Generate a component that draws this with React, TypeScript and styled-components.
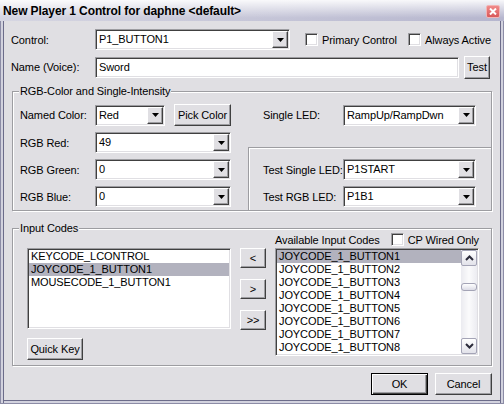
import React from "react"
import styled, { createGlobalStyle, css } from "styled-components"

const face = "#e0dfe3"

const GlobalStyle = createGlobalStyle`
  html, body {
    margin: 0;
    padding: 0;
    background: ${face};
  }
  body {
    font-family: Tahoma, "Liberation Sans", Arial, sans-serif;
    font-size: 11px;
    letter-spacing: -0.1px;
    color: #000;
  }
`

const sunken = css`
  box-sizing: border-box;
  background: #fff;
  border: 1px solid;
  border-color: #9d9da1 #fff #fff #9d9da1;
  box-shadow: inset 1px 1px 0 #404040, inset -1px -1px 0 ${face};
`

const raised = css`
  box-sizing: border-box;
  background: ${face};
  border: 1px solid;
  border-color: #fff #404040 #404040 #fff;
  box-shadow: inset -1px -1px 0 #9d9da1;
`

const Window = styled.div`
  width: 504px;
  height: 404px;
  display: flex;
  flex-direction: column;
  background: ${face};
`

const TitleBar = styled.div`
  height: 21px;
  flex-shrink: 0;
  display: flex;
  align-items: center;
  justify-content: space-between;
  padding: 0 4px 0 3px;
  background: linear-gradient(to bottom, rgba(255, 255, 255, 0.9), rgba(255, 255, 255, 0) 85%),
    linear-gradient(to right, #d6d6e2, #b6b6ce);
`

const TitleText = styled.div`
  font-weight: bold;
  font-size: 12px;
  letter-spacing: -0.1px;
  color: #000;
  padding-top: 1px;
`

const CloseBox = styled.div`
  box-sizing: border-box;
  width: 14px;
  height: 13px;
  margin-top: 1px;
  border: 1px solid #f2b4b4;
  border-radius: 2px;
  background: linear-gradient(to bottom, #f08a8a, #d95858);
  display: flex;
  align-items: center;
  justify-content: center;
`

const Frame = styled.div`
  flex: 1;
  display: flex;
  flex-direction: column;
  padding: 8px 11px 0 10px;
  border: 1px solid #8c8ca6;
  border-top: none;
  box-shadow: inset 2px 0 0 #d2d2de, inset 3px 0 0 #6c6c8a, inset -2px 0 0 #d2d2de,
    inset -3px 0 0 #6c6c8a, inset 0 -2px 0 #d2d2de, inset 0 -3px 0 #6c6c8a;
`

const Row = styled.div<{ $mt?: number; $h?: number }>`
  display: flex;
  align-items: center;
  height: ${p => p.$h ?? 21}px;
  margin-top: ${p => p.$mt ?? 0}px;
  flex-shrink: 0;
`

const Label = styled.div<{ $w: number; $pl?: number }>`
  box-sizing: border-box;
  width: ${p => p.$w}px;
  padding-left: ${p => p.$pl ?? 0}px;
  flex-shrink: 0;
  white-space: nowrap;
`

const TextField = styled.div<{ $w: number }>`
  ${sunken}
  width: ${p => p.$w}px;
  height: 21px;
  padding: 0 3px;
  line-height: 19px;
`

const ComboBox = styled.div<{ $w: number }>`
  ${sunken}
  width: ${p => p.$w}px;
  height: 21px;
  padding: 1px;
  display: flex;
  flex-shrink: 0;
`

const ComboText = styled.div`
  flex: 1;
  padding-left: 2px;
  line-height: 17px;
  white-space: nowrap;
  overflow: hidden;
`

const DropButton = styled.div`
  ${raised}
  width: 16px;
  height: 17px;
  display: flex;
  align-items: center;
  justify-content: center;
`

const Button = styled.button<{ $w: number; $h?: number; $default?: boolean; $ml?: number }>`
  ${raised}
  width: ${p => p.$w}px;
  height: ${p => p.$h ?? 22}px;
  margin-left: ${p => p.$ml ?? 0}px;
  padding: 0;
  font: inherit;
  letter-spacing: inherit;
  color: #000;
  flex-shrink: 0;
  ${p =>
    p.$default &&
    css`
      border-color: #000;
      box-shadow: inset 1px 1px 0 #fff, inset -1px -1px 0 #404040, inset -2px -2px 0 #9d9da1;
    `}
`

const CheckWrap = styled.div<{ $w?: number; $ml?: number }>`
  display: flex;
  align-items: center;
  gap: 4px;
  width: ${p => (p.$w ? `${p.$w}px` : "auto")};
  margin-left: ${p => p.$ml ?? 0}px;
  flex-shrink: 0;
  white-space: nowrap;
`

const CheckBox = styled.div`
  ${sunken}
  width: 13px;
  height: 13px;
`

const Group = styled.div`
  position: relative;
  box-sizing: border-box;
  margin-left: 1px;
  border: 1px solid #9d9da1;
  box-shadow: inset 1px 1px 0 #fff, 1px 1px 0 #fff;
  flex-shrink: 0;
`

const Legend = styled.div`
  position: absolute;
  top: -7px;
  left: 6px;
  padding: 0 1px;
  line-height: 13px;
  background: ${face};
`

const ColorGroup = styled(Group)`
  margin-top: 13px;
  padding: 12px 0 0 7px;
  display: grid;
  grid-template-columns: 211px 1fr;
  column-gap: 17px;
`

const Column = styled.div<{ $pb?: number }>`
  display: flex;
  flex-direction: column;
  gap: 6px;
  padding-bottom: ${p => p.$pb ?? 0}px;
`

const RightColumn = styled.div`
  display: flex;
  flex-direction: column;
`

const SubBox = styled.div`
  flex: 1;
  margin-top: 21px;
  padding: 11px 0 3px 14px;
  display: flex;
  flex-direction: column;
  gap: 6px;
  border-top: 1px solid #9d9da1;
  border-left: 1px solid #9d9da1;
  box-shadow: inset 1px 1px 0 #fff;
`

const InputGroup = styled(Group)`
  margin-top: 17px;
  padding: 0 0 5px 14px;
  display: grid;
  grid-template-columns: 204px 26px 204px;
  grid-template-rows: 19px auto;
  column-gap: 9px;
`

const ListHeader = styled.div`
  grid-column: 3;
  grid-row: 1;
  display: flex;
  align-items: center;
  justify-content: space-between;
  padding-top: 2px;
`

const LeftCell = styled.div`
  grid-column: 1;
  grid-row: 2;
  display: flex;
  flex-direction: column;
  align-items: flex-start;
  gap: 9px;
`

const MoveButtons = styled.div`
  grid-column: 2;
  grid-row: 2;
  display: flex;
  flex-direction: column;
  gap: 11px;
`

const RightCell = styled.div`
  grid-column: 3;
  grid-row: 2;
`

const ListBox = styled.div<{ $h: number }>`
  ${sunken}
  width: 204px;
  height: ${p => p.$h}px;
  padding: 1px;
  display: flex;
`

const Items = styled.div`
  flex: 1;
  overflow: hidden;
`

const Item = styled.div<{ $sel?: boolean }>`
  height: 13px;
  line-height: 13px;
  padding-left: 2px;
  white-space: nowrap;
  background: ${p => (p.$sel ? "#b2b2be" : "transparent")};
`

const ScrollTrack = styled.div`
  width: 16px;
  display: flex;
  flex-direction: column;
  background: linear-gradient(to right, #ebebf0, #fbfbfc 50%, #ececf1);
`

const ScrollButton = styled.div`
  box-sizing: border-box;
  height: 16px;
  border: 1px solid #a4a4b6;
  border-radius: 2px;
  background: linear-gradient(to bottom, #ffffff, #e2e2ea);
  display: flex;
  align-items: center;
  justify-content: center;
`

const ScrollSpace = styled.div`
  flex: 1;
`

const Thumb = styled.div`
  box-sizing: border-box;
  height: 8px;
  margin: 17px 0 0;
  border: 1px solid #a4a4b6;
  border-radius: 3px;
  background: linear-gradient(to bottom, #ffffff, #dcdce6);
`

const Footer = styled.div`
  display: flex;
  justify-content: flex-end;
  gap: 7px;
  margin-top: 7px;
`

const DownTriangle = () => (
  <svg width="7" height="4" viewBox="0 0 7 4">
    <polygon points="0,0 7,0 3.5,4" fill="#000" />
  </svg>
)

const Chevron = ({ up }: { up?: boolean }) => (
  <svg width="9" height="6" viewBox="0 0 9 6">
    <polyline
      points={up ? "1,5 4.5,1.5 8,5" : "1,1 4.5,4.5 8,1"}
      fill="none"
      stroke="#2b2b3a"
      strokeWidth="2"
    />
  </svg>
)

const Combo = ({ value, width }: { value: string; width: number }) => (
  <ComboBox $w={width}>
    <ComboText>{value}</ComboText>
    <DropButton>
      <DownTriangle />
    </DropButton>
  </ComboBox>
)

const Check = ({ label, width, ml }: { label: string; width?: number; ml?: number }) => (
  <CheckWrap $w={width} $ml={ml}>
    <CheckBox />
    <span>{label}</span>
  </CheckWrap>
)

const available = [1, 2, 3, 4, 5, 6, 7, 8].map(n => `JOYCODE_1_BUTTON${n}`)

export default function App() {
  return (
    <>
      <GlobalStyle />
      <Window>
        <TitleBar>
          <TitleText>New Player 1 Control for daphne &lt;default&gt;</TitleText>
          <CloseBox>
            <svg width="8" height="7" viewBox="0 0 8 7">
              <path d="M1 0.5 L7 6.5 M7 0.5 L1 6.5" stroke="#fff" strokeWidth="2" />
            </svg>
          </CloseBox>
        </TitleBar>
        <Frame>
          <Row>
            <Label $w={84}>Control:</Label>
            <Combo value="P1_BUTTON1" width={195} />
            <Check label="Primary Control" width={103} ml={15} />
            <Check label="Always Active" />
          </Row>
          <Row $mt={6} $h={22}>
            <Label $w={84}>Name (Voice):</Label>
            <TextField $w={364}>Sword</TextField>
            <Button $w={26} $h={23} $ml={5}>Test</Button>
          </Row>

          <ColorGroup>
            <Legend>RGB-Color and Single-Intensity</Legend>
            <Column $pb={3}>
              <Row $h={22}>
                <Label $w={75}>Named Color:</Label>
                <Combo value="Red" width={70} />
                <Button $w={57} $ml={9}>Pick Color</Button>
              </Row>
              <Row>
                <Label $w={75}>RGB Red:</Label>
                <Combo value="49" width={136} />
              </Row>
              <Row>
                <Label $w={75}>RGB Green:</Label>
                <Combo value="0" width={136} />
              </Row>
              <Row>
                <Label $w={75}>RGB Blue:</Label>
                <Combo value="0" width={136} />
              </Row>
            </Column>
            <RightColumn>
              <Row $h={22}>
                <Label $w={95} $pl={15}>Single LED:</Label>
                <Combo value="RampUp/RampDwn" width={133} />
              </Row>
              <SubBox>
                <Row>
                  <Label $w={80}>Test Single LED:</Label>
                  <Combo value="P1START" width={133} />
                </Row>
                <Row>
                  <Label $w={80}>Test RGB LED:</Label>
                  <Combo value="P1B1" width={133} />
                </Row>
              </SubBox>
            </RightColumn>
          </ColorGroup>

          <InputGroup>
            <Legend>Input Codes</Legend>
            <ListHeader>
              <span>Available Input Codes</span>
              <Check label="CP Wired Only" />
            </ListHeader>
            <LeftCell>
              <ListBox $h={81}>
                <Items>
                  <Item>KEYCODE_LCONTROL</Item>
                  <Item $sel>JOYCODE_1_BUTTON1</Item>
                  <Item>MOUSECODE_1_BUTTON1</Item>
                </Items>
              </ListBox>
              <Button $w={56}>Quick Key</Button>
            </LeftCell>
            <MoveButtons>
              <Button $w={26} $h={20}>&lt;</Button>
              <Button $w={26} $h={20}>&gt;</Button>
              <Button $w={26} $h={20}>&gt;&gt;</Button>
            </MoveButtons>
            <RightCell>
              <ListBox $h={108}>
                <Items>
                  {available.map((code, i) => (
                    <Item key={code} $sel={i === 0}>
                      {code}
                    </Item>
                  ))}
                </Items>
                <ScrollTrack>
                  <ScrollButton>
                    <Chevron up />
                  </ScrollButton>
                  <Thumb />
                  <ScrollSpace />
                  <ScrollButton>
                    <Chevron />
                  </ScrollButton>
                </ScrollTrack>
              </ListBox>
            </RightCell>
          </InputGroup>

          <Footer>
            <Button $w={57} $default>OK</Button>
            <Button $w={57}>Cancel</Button>
          </Footer>
        </Frame>
      </Window>
    </>
  )
}
